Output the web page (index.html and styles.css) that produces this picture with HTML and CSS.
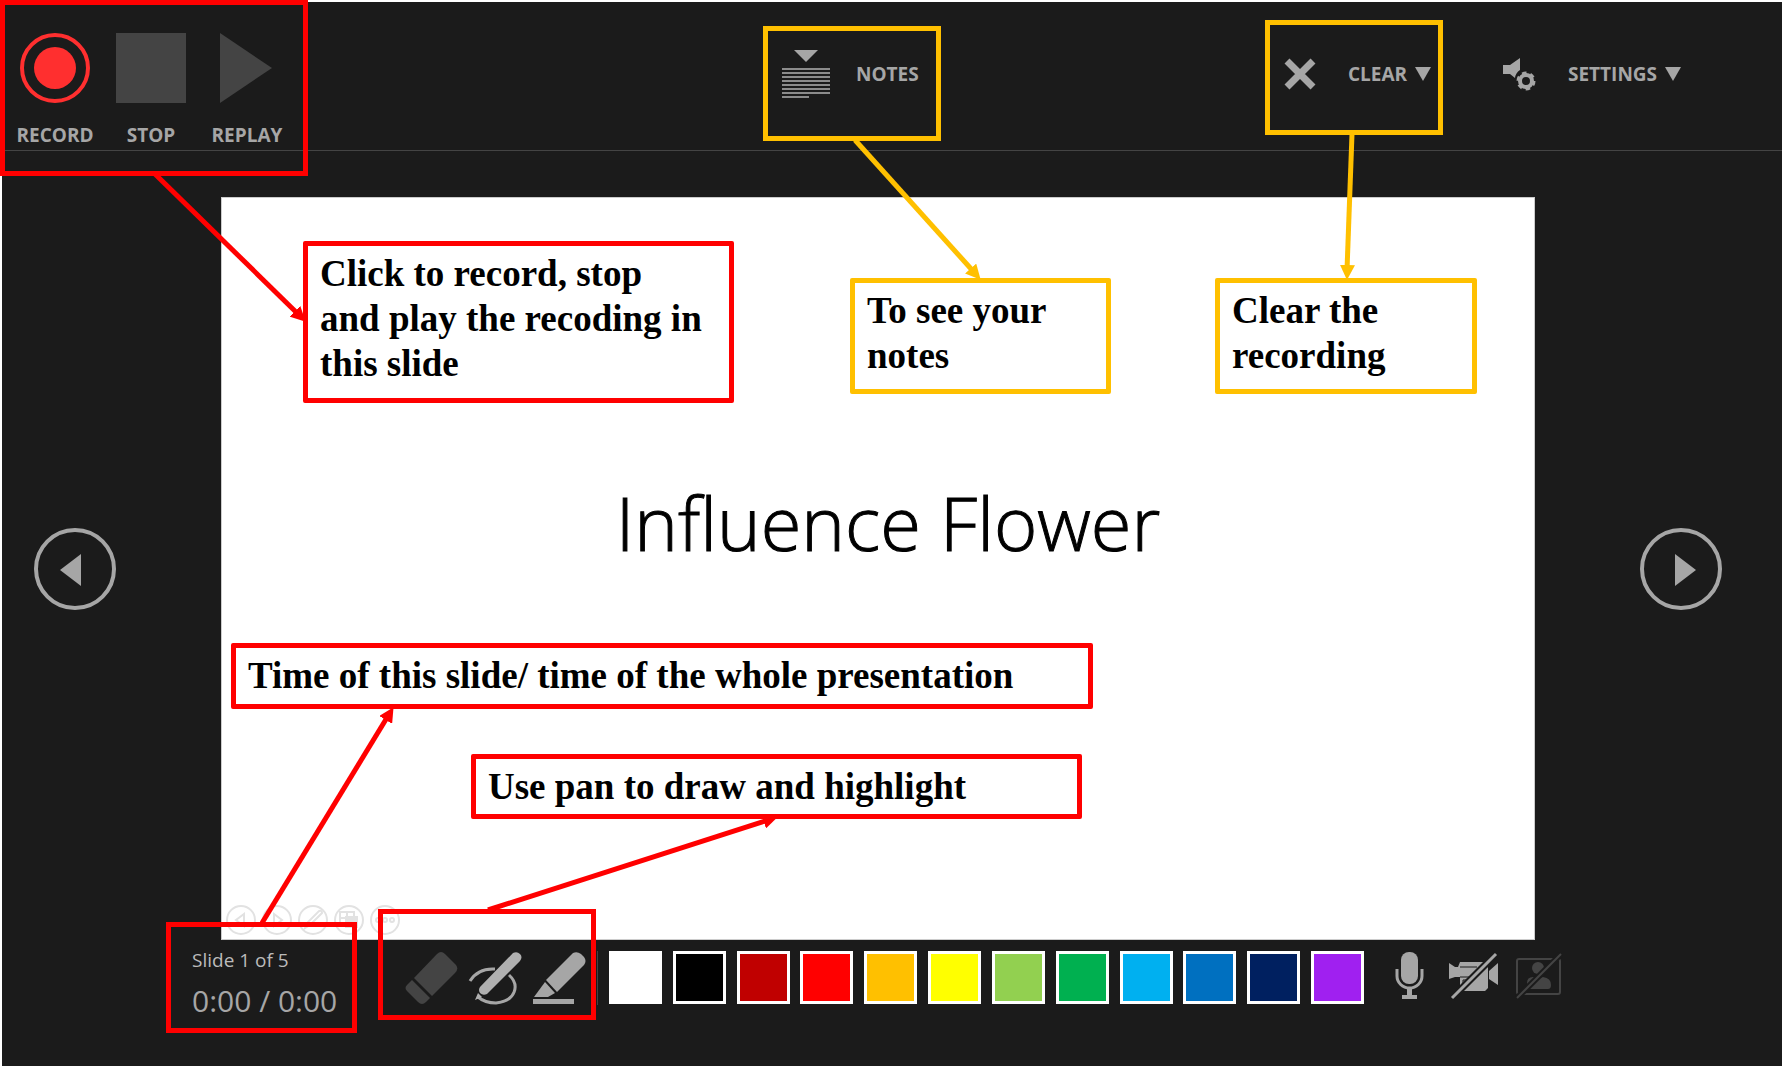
FILE: index.html
```html
<!DOCTYPE html>
<html lang="en">
<head>
<meta charset="utf-8">
<title>Influence Flower - Recording</title>
<link rel="stylesheet" href="styles.css">
</head>
<body>
<div class="recorder">
  <header class="toolbar">
    <div class="transport">
      <button class="transport-btn" type="button">
        <svg width="70" height="70" viewBox="0 0 70 70"><circle cx="35" cy="35" r="33" fill="none" stroke="#ff2f2f" stroke-width="4"/><circle cx="35" cy="35" r="21" fill="#ff2f2f"/></svg>
        <span>RECORD</span>
      </button>
      <button class="transport-btn" type="button">
        <svg width="70" height="70" viewBox="0 0 70 70"><rect width="70" height="70" fill="#444"/></svg>
        <span>STOP</span>
      </button>
      <button class="transport-btn" type="button">
        <svg width="70" height="70" viewBox="0 0 70 70"><path d="M8 0L60 35L8 70Z" fill="#444"/></svg>
        <span>REPLAY</span>
      </button>
    </div>
    <button class="tool tool-notes" type="button">
      <svg width="48" height="50" viewBox="0 0 48 50" fill="#a6a6a6"><path d="M12 1H36L24 13Z"/><path d="M0 20H48M0 24H48M0 28H48M0 32H48M0 36H48M0 40H48M0 44H48M0 48H27" stroke="#8c8c8c" stroke-width="2"/></svg>
      <span>NOTES</span>
    </button>
    <button class="tool" type="button">
      <svg width="32" height="32" viewBox="0 0 32 32"><path d="M3 3L29 29M29 3L3 29" stroke="#a6a6a6" stroke-width="7"/></svg>
      <span>CLEAR</span>
      <svg class="caret" width="16" height="14" viewBox="0 0 16 14"><path d="M0 0H16L8 14Z" fill="#a6a6a6"/></svg>
    </button>
    <button class="tool" type="button">
      <svg width="33" height="34" viewBox="0 0 33 34"><path d="M0 8H7L17 1V13A11 11 0 0 0 12 21L7 17H0Z" fill="#a6a6a6"/><g fill="none" stroke="#a6a6a6"><circle cx="23" cy="24" r="6" stroke-width="4"/><circle cx="23" cy="24" r="8" stroke-width="3" stroke-dasharray="4.4 3.98"/></g></svg>
      <span>SETTINGS</span>
      <svg class="caret" width="16" height="14" viewBox="0 0 16 14"><path d="M0 0H16L8 14Z" fill="#a6a6a6"/></svg>
    </button>
  </header>

  <main class="stage">
    <button class="nav nav-prev" type="button" aria-label="Previous slide">
      <svg width="82" height="82" viewBox="0 0 82 82"><circle cx="41" cy="41" r="39" fill="none" stroke="#a6a6a6" stroke-width="4"/><path d="M26 42L47 26V58Z" fill="#a6a6a6"/></svg>
    </button>
    <section class="slide">
      <h1 class="slide-title">Influence Flower</h1>
      <div class="slide-hints">
        <svg viewBox="0 0 32 32"><circle cx="16" cy="16" r="14"/><path d="M19 10V22L11 16Z"/></svg>
        <svg viewBox="0 0 32 32"><circle cx="16" cy="16" r="14"/><path d="M13 10V22L21 16Z"/></svg>
        <svg viewBox="0 0 32 32"><circle cx="16" cy="16" r="14"/><path d="M8 24L10 19L22 7Q25 6 25 9L13 21Z"/></svg>
        <svg viewBox="0 0 32 32"><circle cx="16" cy="16" r="14"/><path d="M7 8H21V20H7ZM7 14H21M14 8V20"/><path d="M13 13H24V23H13Z" fill="#e2e2e2"/></svg>
        <svg viewBox="0 0 32 32"><circle cx="16" cy="16" r="14"/><circle cx="9" cy="16" r="2"/><circle cx="16" cy="16" r="2"/><circle cx="23" cy="16" r="2"/></svg>
      </div>
    </section>
    <button class="nav nav-next" type="button" aria-label="Next slide">
      <svg width="82" height="82" viewBox="0 0 82 82"><circle cx="41" cy="41" r="39" fill="none" stroke="#a6a6a6" stroke-width="4"/><path d="M56 42L35 26V58Z" fill="#a6a6a6"/></svg>
    </button>
  </main>

  <footer class="controls">
    <div class="status">
      <p class="status-slide">Slide 1 of 5</p>
      <p class="status-time">0:00 / 0:00</p>
    </div>
    <div class="pens">
      <button type="button" aria-label="Eraser">
        <svg width="54" height="54" viewBox="0 0 54 54" fill="#444"><path d="M10 27L33 3Q37 -1 41 3L52 14Q55 18 51 22L28 45Z"/><path d="M8 29L26 47L22 51Q18 55 14 51L3 40Q0 37 3 34Z"/></svg>
      </button>
      <button type="button" aria-label="Pen">
        <svg width="54" height="54" viewBox="0 0 54 54"><path d="M2 30Q10 17 27 18M41 24C52 34 48 50 28 52Q17 52 10 46" fill="none" stroke="#a6a6a6" stroke-width="3"/><path d="M12 36L45 2Q49 0 52 3Q55 6 52 10L19 43Q15 45 12 42Q10 39 12 36ZM10 42L14 46L7 49Z" fill="#b0b0b0"/></svg>
      </button>
      <button type="button" aria-label="Highlighter">
        <svg width="54" height="54" viewBox="0 0 54 54" fill="#a6a6a6"><path d="M14 29L41 2Q45 0 49 3L52 6Q55 10 52 14L25 41Z"/><path d="M13 31L23 42L16 46H2Z"/><rect x="1" y="48" width="41" height="5"/></svg>
      </button>
    </div>
    <div class="swatches">
      <button class="swatch white" type="button" aria-label="White"></button>
      <button class="swatch black" type="button" aria-label="Black"></button>
      <button class="swatch dark-red" type="button" aria-label="Dark red"></button>
      <button class="swatch red" type="button" aria-label="Red"></button>
      <button class="swatch orange" type="button" aria-label="Orange"></button>
      <button class="swatch yellow" type="button" aria-label="Yellow"></button>
      <button class="swatch lime" type="button" aria-label="Light green"></button>
      <button class="swatch green" type="button" aria-label="Green"></button>
      <button class="swatch sky" type="button" aria-label="Light blue"></button>
      <button class="swatch blue" type="button" aria-label="Blue"></button>
      <button class="swatch navy" type="button" aria-label="Dark blue"></button>
      <button class="swatch purple" type="button" aria-label="Purple"></button>
    </div>
    <div class="devices">
      <button type="button" aria-label="Microphone">
        <svg width="30" height="50" viewBox="0 0 30 50"><rect x="6" y="1" width="17" height="32" rx="8" fill="#a6a6a6"/><path d="M2 18V25A12.500 12 0 0 0 27 25V18" fill="none" stroke="#a6a6a6" stroke-width="3"/><path d="M12 36H17V44H22V48H7V44H12Z" fill="#a6a6a6"/></svg>
      </button>
      <button type="button" aria-label="Camera">
        <svg width="50" height="50" viewBox="0 0 50 50"><path d="M0 12L6 16H9L11 11H37L39 17V37L36 40H11V26H6L0 28ZM40 20L49 12V34L40 28Z" fill="#a6a6a6"/><path d="M11 16H28M11 26H20M14 29H18V32H14Z" fill="none" stroke="#1b1b1b" stroke-width="1"/><path d="M3 47L47 3" stroke="#1b1b1b" stroke-width="7"/><path d="M3 47L47 3" stroke="#a6a6a6" stroke-width="3"/></svg>
      </button>
      <button type="button" aria-label="Camera preview">
        <svg width="48" height="50" viewBox="0 0 48 50"><rect x="2" y="8" width="43" height="35" rx="2" fill="none" stroke="#444" stroke-width="2"/><circle cx="23" cy="17" r="6" fill="#444"/><path d="M12 38V32Q12 26 18 26L23 28L28 26Q36 27 36 34Q36 38 33 38Z" fill="#444"/><path d="M2 47L46 3" stroke="#1b1b1b" stroke-width="6"/><path d="M2 47L46 3" stroke="#444" stroke-width="2"/></svg>
      </button>
    </div>
  </footer>

  <div class="annotations">
    <div class="frame red-line frame-transport"></div>
    <div class="frame gold-line frame-notes"></div>
    <div class="frame gold-line frame-clear"></div>
    <div class="frame red-line frame-time"></div>
    <div class="frame red-line frame-pens"></div>
    <p class="callout red-line callout-record">Click to record, stop<br>and play the recoding in this slide</p>
    <p class="callout gold-line callout-notes">To see your notes</p>
    <p class="callout gold-line callout-clear">Clear the recording</p>
    <p class="callout red-line callout-time">Time of this slide/ time of the whole presentation</p>
    <p class="callout red-line callout-pens">Use pan to draw and highlight</p>
    <svg class="arrows" width="1782" height="1066" viewBox="0 0 1782 1066">
      <defs>
        <marker id="head-red" markerUnits="userSpaceOnUse" markerWidth="15" markerHeight="15" refX="14" refY="7.500" orient="auto"><path d="M0 0L15 7.500L0 15Z" fill="#f00"/></marker>
        <marker id="head-gold" markerUnits="userSpaceOnUse" markerWidth="15" markerHeight="15" refX="14" refY="7.500" orient="auto"><path d="M0 0L15 7.500L0 15Z" fill="#ffc000"/></marker>
      </defs>
      <g stroke="#f00" stroke-width="5">
        <path d="M155 174L297 313"/><path d="M262 923L388 716"/><path d="M488 910L768 820"/>
      </g>
      <g stroke="#ffc000" stroke-width="5">
        <path d="M855 140L973 271"/><path d="M1352 134L1347 270"/>
      </g>
      <g stroke="none" fill="none">
        <path d="M155 174L305 321" marker-end="url(#head-red)"/><path d="M262 923L393 708" marker-end="url(#head-red)"/><path d="M488 910L777 817" marker-end="url(#head-red)"/>
        <path d="M855 140L980 279" marker-end="url(#head-gold)"/><path d="M1352 134L1347 279" marker-end="url(#head-gold)"/>
      </g>
    </svg>
  </div>
</div>
</body>
</html>
```
FILE: styles.css
```css
* { box-sizing: border-box; }

body {
  margin: 0;
  background: #fff;
  font-family: "Open Sans", "Noto Sans", sans-serif;
  color: #a6a6a6;
}

p, h1 { margin: 0; }

svg { display: block; }

button {
  margin: 0;
  padding: 0;
  border: 0;
  background: none;
  color: inherit;
  font: inherit;
}

.recorder {
  position: relative;
  display: flex;
  flex-direction: column;
  min-height: 100vh;
  border: solid #fff;
  border-width: 2px 0 0 2px;
  background: #1b1b1b;
}

/* Top bar */
.toolbar {
  display: grid;
  grid-template-columns: 780fr 502fr 219fr 279fr;
  align-items: start;
  height: 149px;
  padding-top: 30px;
  border-bottom: 1px solid #444;
  font-size: 19px;
  font-weight: 700;
  line-height: 26px;
}

.transport {
  display: grid;
  grid-template-columns: repeat(3, 96px);
  padding: 1px 0 0 5px;
}

.transport-btn {
  display: flex;
  flex-direction: column;
  align-items: center;
  gap: 19px;
}

.tool {
  display: flex;
  align-items: center;
  gap: 32px;
  height: 84px;
}

.tool-notes { gap: 26px; }

.caret { margin-left: -24px; }

/* Slide area */
.stage {
  display: grid;
  grid-template-columns: 219fr 1314fr 247fr;
  align-items: center;
  padding-top: 46px;
}

.nav-prev { justify-self: start; margin-left: 32px; }
.nav-next { justify-self: end; margin-right: 60px; }

.slide {
  display: flex;
  flex-direction: column;
  justify-content: space-between;
  aspect-ratio: 1314 / 743;
  padding: 271px 3px 3px;
  border: 1px solid #ccc;
  background: #fff;
}

.slide-title {
  padding-left: 20px;
  color: #000;
  font-family: "Open Sans", sans-serif;
  font-size: 74px;
  font-weight: 300;
  font-variant-ligatures: none;
  line-height: 108px;
  text-align: center;
  -webkit-text-stroke: 1px #000;
}

.slide-hints {
  display: flex;
  gap: 4px;
}

.slide-hints svg {
  width: 32px;
  height: 32px;
  fill: none;
  stroke: #e2e2e2;
  stroke-width: 2;
}

/* Bottom bar */
.controls {
  display: flex;
  align-items: flex-start;
  padding: 11px 0 0 190px;
}

.status { width: 212px; }

.status-slide {
  color: #bbb;
  font-size: 19px;
  line-height: 18px;
}

.status-time {
  margin-top: 12px;
  font-size: 30px;
  line-height: 40px;
}

.pens {
  display: flex;
  gap: 10px;
  width: 194px;
  border-right: 1px solid #444;
}

.swatches {
  display: flex;
  justify-content: space-between;
  width: 755px;
  margin-left: 11px;
}

.swatch {
  width: 53px;
  height: 53px;
  border: 3px solid #fff;
}

.white { background: #fff; }
.black { background: #000; }
.dark-red { background: #c00000; }
.red { background: #f00; }
.orange { background: #ffc000; }
.yellow { background: #ff0; }
.lime { background: #92d050; }
.green { background: #00b050; }
.sky { background: #00b0f0; }
.blue { background: #0070c0; }
.navy { background: #002060; }
.purple { background: #a020f0; }

.devices {
  display: flex;
  gap: 16px;
  margin-left: 31px;
}

.devices button:first-child { margin-right: 8px; }

/* Callouts laid over the window */
.annotations {
  position: absolute;
  top: -2px;
  left: -2px;
}

.arrows {
  position: absolute;
  top: 0;
  left: 0;
}

.frame,
.callout {
  position: absolute;
  border: 5px solid;
}

.red-line { border-color: #f00; }
.gold-line { border-color: #ffc000; }

.callout {
  padding: 5px 12px;
  border-radius: 2px;
  background: #fff;
  color: #000;
  font-family: "Liberation Serif", serif;
  font-size: 37px;
  font-weight: 700;
  line-height: 45px;
}

.frame-transport { top: 0; left: 0; width: 308px; height: 176px; }
.frame-notes { top: 26px; left: 763px; width: 178px; height: 115px; }
.frame-clear { top: 20px; left: 1265px; width: 178px; height: 115px; }
.frame-time { top: 922px; left: 166px; width: 191px; height: 111px; }
.frame-pens { top: 909px; left: 378px; width: 218px; height: 111px; }

.callout-record { top: 241px; left: 303px; width: 431px; height: 162px; }
.callout-notes { top: 278px; left: 850px; width: 261px; height: 116px; }
.callout-clear { top: 278px; left: 1215px; width: 262px; height: 116px; }
.callout-time { top: 643px; left: 231px; width: 862px; height: 66px; }
.callout-pens { top: 754px; left: 471px; width: 611px; height: 65px; }
```
